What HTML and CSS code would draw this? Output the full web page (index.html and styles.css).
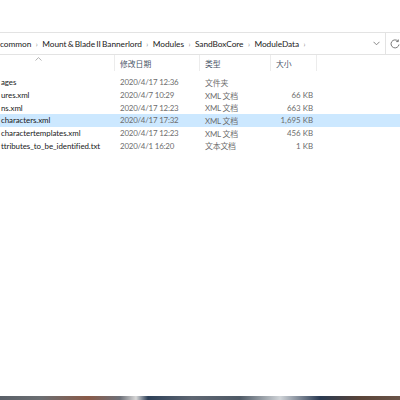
FILE: index.html
```html
<!DOCTYPE html>
<html lang="zh-CN">
<head>
<meta charset="utf-8">
<link rel="stylesheet" href="styles.css">
</head>
<body>
<div class="window">
  <div class="titlearea"></div>
  <div class="addressbar">
    <div class="crumbs">
      <span class="crumb">common</span><span class="sep">›</span>
      <span class="crumb">Mount &amp; Blade II Bannerlord</span><span class="sep">›</span>
      <span class="crumb">Modules</span><span class="sep">›</span>
      <span class="crumb">SandBoxCore</span><span class="sep">›</span>
      <span class="crumb">ModuleData</span><span class="sep">›</span>
      <span class="spacer"></span>
      <svg class="dropdown" width="7" height="5" viewBox="0 0 7 5"><path d="M0.5 0.8 L3.5 3.8 L6.5 0.8" fill="none" stroke="#7a7a7a" stroke-width="0.9"/></svg>
    </div>
    <div class="refresh">
      <svg width="10" height="10" viewBox="0 0 10 10"><path d="M8 2.2 A4 4 0 1 0 9 5.5" fill="none" stroke="#6a6a6a" stroke-width="0.9"/><path d="M8.3 0.5 L8.3 2.6 L6.2 2.6" fill="none" stroke="#6a6a6a" stroke-width="0.9"/></svg>
    </div>
  </div>
  <div class="list">
    <div class="row header">
      <div class="cell name-h"><svg class="sort" width="7" height="4" viewBox="0 0 7 4"><path d="M0.5 3.5 L3.5 0.6 L6.5 3.5" fill="none" stroke="#a0a0a0" stroke-width="0.8"/></svg></div>
      <div class="cell">修改日期</div>
      <div class="cell">类型</div>
      <div class="cell">大小</div>
    </div>
    <div class="row"><div class="cell name">ages</div><div class="cell dim">2020/4/17 12:36</div><div class="cell dim">文件夹</div><div class="cell dim size"></div></div>
    <div class="row"><div class="cell name">ures.xml</div><div class="cell dim">2020/4/7 10:29</div><div class="cell dim">XML 文档</div><div class="cell dim size">66 KB</div></div>
    <div class="row"><div class="cell name">ns.xml</div><div class="cell dim">2020/4/17 12:23</div><div class="cell dim">XML 文档</div><div class="cell dim size">663 KB</div></div>
    <div class="row selected"><div class="cell name">characters.xml</div><div class="cell dim">2020/4/17 17:32</div><div class="cell dim">XML 文档</div><div class="cell dim size">1,695 KB</div></div>
    <div class="row"><div class="cell name">charactertemplates.xml</div><div class="cell dim">2020/4/17 12:23</div><div class="cell dim">XML 文档</div><div class="cell dim size">456 KB</div></div>
    <div class="row"><div class="cell name">ttributes_to_be_identified.txt</div><div class="cell dim">2020/4/1 16:20</div><div class="cell dim">文本文档</div><div class="cell dim size">1 KB</div></div>
  </div>
  <div class="fill"></div>
  <div class="wallpaper"></div>
</div>
</body>
</html>
```

FILE: styles.css
```css
html, body {
  margin: 0;
  padding: 0;
  background: #ffffff;
}
body {
  font-family: Lato, "Noto Sans CJK SC", sans-serif;
  font-size: 7.9px;
  color: #1a1a1a;
}
.window {
  width: 400px;
  height: 400px;
  display: flex;
  flex-direction: column;
  overflow: hidden;
}
.titlearea {
  height: 32px;
  flex: none;
}
.addressbar {
  height: 21px;
  flex: none;
  display: flex;
  border-top: 1px solid #e3e3e3;
  border-bottom: 1px solid #e3e3e3;
}
.crumbs {
  width: 388px;
  display: flex;
  align-items: center;
  border-right: 1px solid #e3e3e3;
  box-sizing: border-box;
  white-space: nowrap;
}
.crumb {
  color: #1a1a1a;
  font-size: 8.3px;
  letter-spacing: -0.05px;
  word-spacing: -0.8px;
}
.sep {
  color: #8a8a8a;
  font-size: 7px;
  margin: 0 4.5px;
}
.spacer { flex: 1; }
.dropdown { margin-right: 5px; }
.refresh {
  flex: 1;
  display: flex;
  align-items: center;
  padding-left: 4px;
}
.list {
  flex: none;
}
.row {
  display: grid;
  grid-template-columns: 115px 85px 71px 46px;
  height: 12.7px;
  align-items: center;
  white-space: nowrap;
}
.row.header {
  height: 18px;
  margin-bottom: 3px;
  color: #4a5568;
  font-size: 7.8px;
  align-items: start;
}
.row.header .cell {
  height: 16px;
  display: flex;
  align-items: center;
  border-right: 1px solid #ececec;
  padding-left: 5px;
}
.row.header .name-h {
  padding-left: 35px;
  align-items: flex-start;
  padding-top: 2px;
}
.cell {
  overflow: hidden;
  box-sizing: border-box;
}
.name {
  padding-left: 1px;
  color: #1a1a1a;
  letter-spacing: -0.05px;
}
.dim {
  color: #6d6d6d;
  padding-left: 5px;
  letter-spacing: -0.2px;
}
.size {
  text-align: right;
  padding-right: 4px;
  letter-spacing: 0;
}
.row.selected {
  background: #cce8ff;
}
.fill { flex: 1; }
.wallpaper {
  height: 4px;
  flex: none;
  background: linear-gradient(90deg, #5a6068 0%, #6b6e72 10%, #8a5a48 22%, #6d7078 30%, #d8d8d8 34%, #2d4058 37%, #5e6672 48%, #4f5a66 60%, #d0d4d8 70%, #2a3a52 80%, #5a4438 90%, #6a5448 100%);
}
```
